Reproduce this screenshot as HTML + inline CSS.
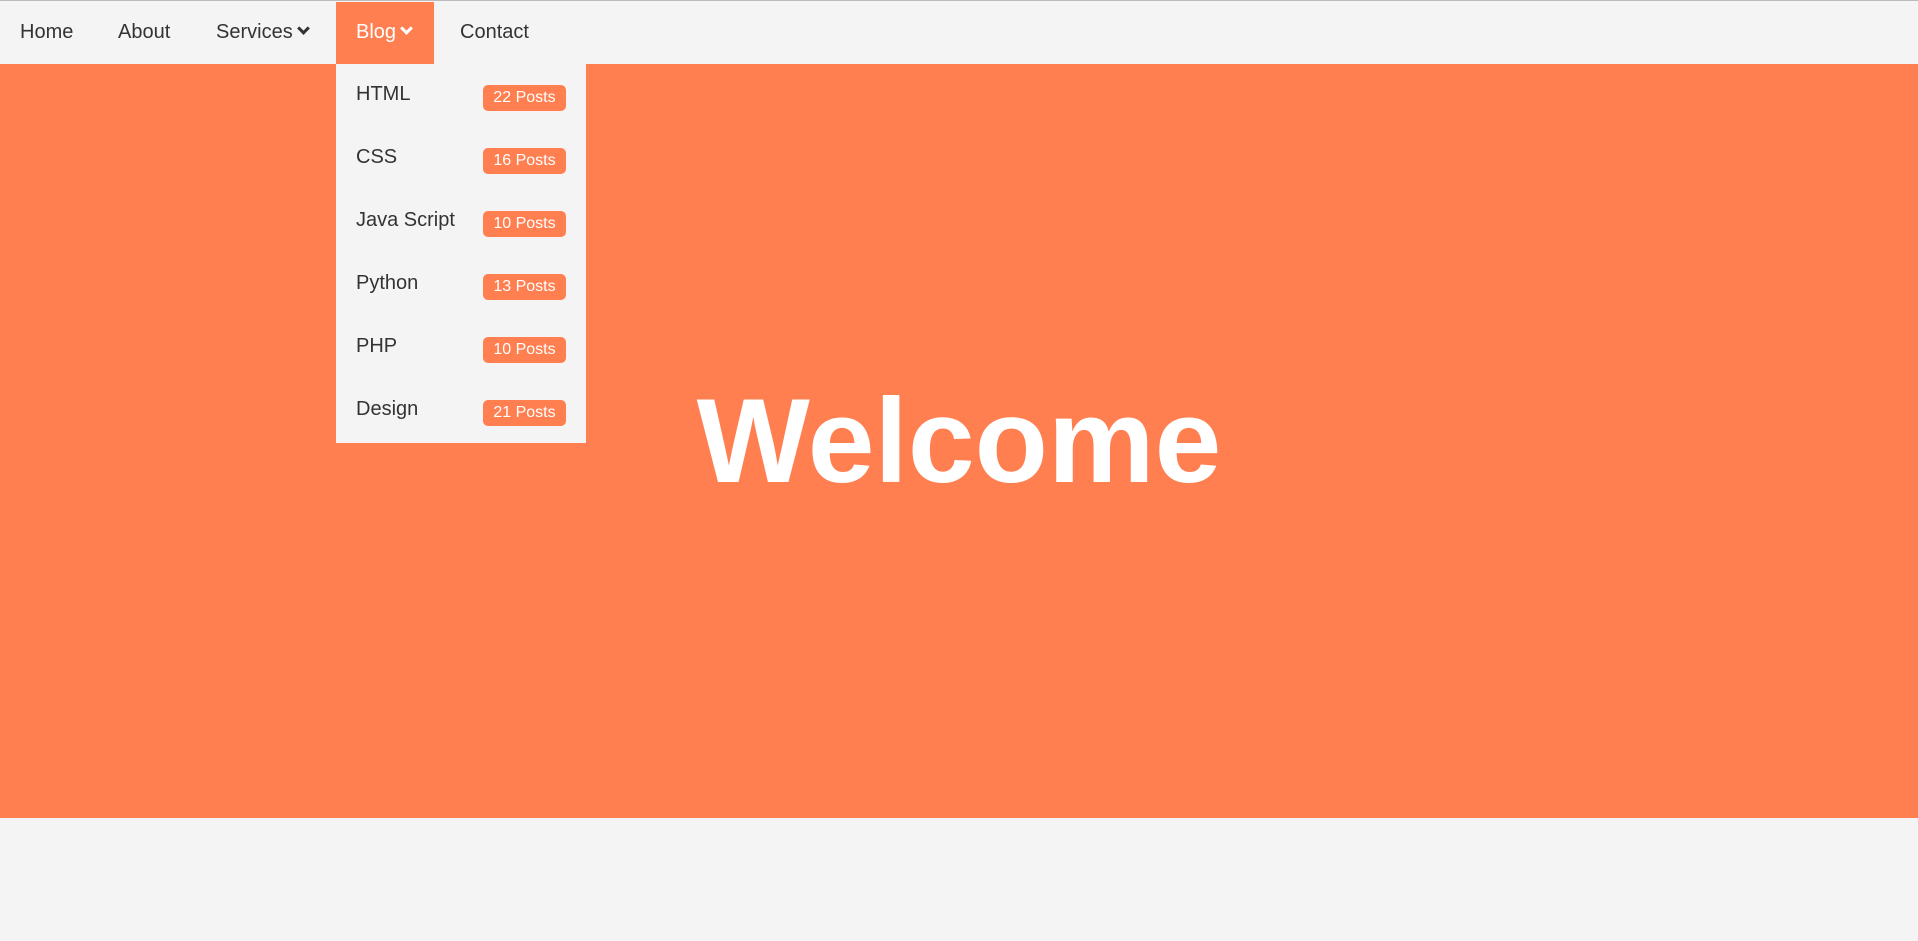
<!DOCTYPE html>
<html><head><meta charset="utf-8"><style>
*{margin:0;padding:0;box-sizing:border-box}
body{width:1918px;height:941px;background:#f4f4f4;font-family:"Liberation Sans",Arial,sans-serif;color:#333;position:relative;overflow:hidden;border-top:1px solid #bbb}
.nav{position:absolute;top:1px;left:0;width:1918px;height:62px;background:#f4f4f4}
.nav a{position:absolute;top:0;height:62px;line-height:61px;font-size:20px;color:#333;text-decoration:none;white-space:nowrap}
.chev{display:inline-block;width:9px;height:9px;border-right:3px solid currentColor;border-bottom:3px solid currentColor;transform:rotate(45deg);margin-left:6px;position:relative;top:-5px}
.blog{left:336px;width:98px;background:#ff7f50;color:#fff!important;padding-left:20px}
.hero{position:absolute;top:63px;left:0;width:1918px;height:754px;background:#ff7f50;display:flex;align-items:center;justify-content:center}
.hero h1{color:#fff;font-size:120px;font-weight:bold;position:relative;left:0}
.dd{position:absolute;left:336px;top:63px;width:250px;height:379px;background:#f4f4f4}
.row{height:63px;position:relative;font-size:20px}
.row span{position:absolute;left:20px;top:19px}
.row b{position:absolute;left:147px;top:21px;width:83px;height:26px;background:#ff7f50;color:#fff;border-radius:5px;font-weight:normal;font-size:16px;line-height:26px;text-align:center}
</style></head><body>
<div class="nav">
<a style="left:20px">Home</a>
<a style="left:118px">About</a>
<a style="left:216px">Services<i class="chev"></i></a>
<a class="blog">Blog<i class="chev"></i></a>
<a style="left:460px">Contact</a>
</div>
<div class="hero"><h1>Welcome</h1></div>
<div class="dd">
<div class="row"><span>HTML</span><b>22 Posts</b></div>
<div class="row"><span>CSS</span><b>16 Posts</b></div>
<div class="row"><span>Java Script</span><b>10 Posts</b></div>
<div class="row"><span>Python</span><b>13 Posts</b></div>
<div class="row"><span>PHP</span><b>10 Posts</b></div>
<div class="row"><span>Design</span><b>21 Posts</b></div>
</div>
</body></html>
